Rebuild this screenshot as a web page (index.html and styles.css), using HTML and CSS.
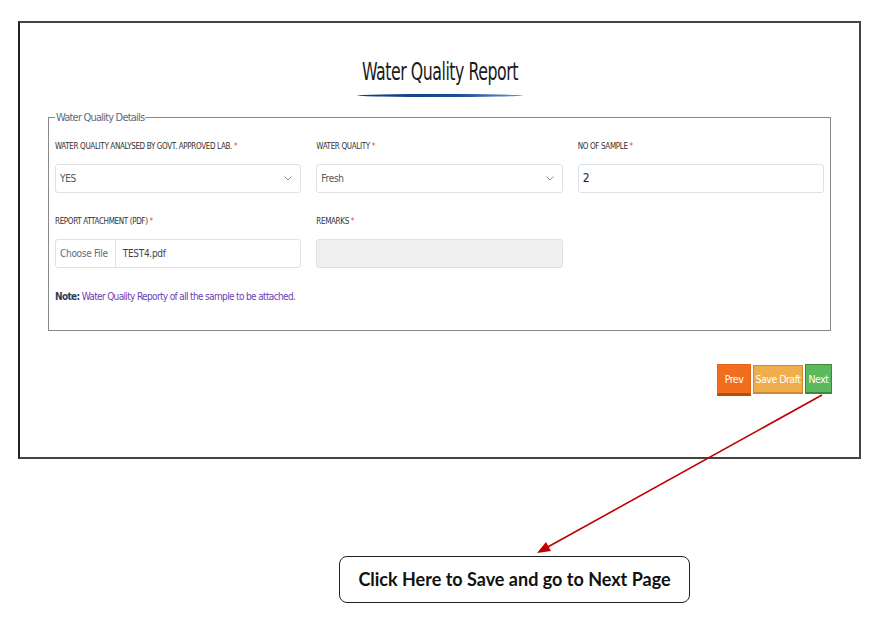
FILE: index.html
```html
<!DOCTYPE html>
<html lang="en">
<head>
<meta charset="UTF-8">
<meta name="viewport" content="width=device-width, initial-scale=1.0">
<title>Water Quality Report</title>
<link rel="stylesheet" href="styles.css">
</head>
<body>

<div class="frame">
    <div class="title-wrap">
        <h1>Water Quality Report</h1>
        <div class="title-line"></div>
    </div>

    <fieldset class="details">
        <legend>Water Quality Details</legend>
        <div class="form-grid">
            <div class="field">
                <label>WATER QUALITY ANALYSED BY GOVT. APPROVED LAB. <span class="req">*</span></label>
                <div class="input select">YES
                    <svg class="chev" width="8" height="5" viewBox="0 0 8 5"><path d="M0.5 0.5 L4 4 L7.5 0.5" fill="none" stroke="#8a8f99" stroke-width="1"/></svg>
                </div>
            </div>
            <div class="field">
                <label>WATER QUALITY <span class="req">*</span></label>
                <div class="input select">Fresh
                    <svg class="chev" width="8" height="5" viewBox="0 0 8 5"><path d="M0.5 0.5 L4 4 L7.5 0.5" fill="none" stroke="#8a8f99" stroke-width="1"/></svg>
                </div>
            </div>
            <div class="field">
                <label>NO OF SAMPLE <span class="req">*</span></label>
                <div class="input value">2</div>
            </div>
            <div class="field">
                <label>REPORT ATTACHMENT (PDF) <span class="req">*</span></label>
                <div class="input file">
                    <span class="file-btn">Choose File</span>
                    <span class="file-name">TEST4.pdf</span>
                </div>
            </div>
            <div class="field">
                <label>REMARKS <span class="req">*</span></label>
                <div class="input disabled"></div>
            </div>
        </div>
        <p class="note"><strong>Note:</strong> Water Quality Reporty of all the sample to be attached.</p>
    </fieldset>

    <div class="button-row">
        <button class="btn btn-prev">Prev</button>
        <button class="btn btn-draft">Save Draft</button>
        <button class="btn btn-next">Next</button>
    </div>
</div>

<div class="callout">Click Here to Save and go to Next Page</div>

<svg class="arrow" width="887" height="622" viewBox="0 0 887 622">
    <line x1="822" y1="395" x2="546" y2="548" stroke="#c00000" stroke-width="1.6"/>
    <polygon points="537,553 546,542 551,551" fill="#c00000"/>
</svg>

</body>
</html>
```

FILE: styles.css
```css
body {
    margin: 0;
    padding: 0;
    background-color: #fff;
    font-family: "DejaVu Sans Condensed", Roboto, sans-serif;
    color: #222;
    position: relative;
    width: 887px;
    height: 622px;
}
.frame {
    margin: 21px 0 0 18px;
    width: 843px;
    height: 438px;
    box-sizing: border-box;
    border: 2px solid #444;
    border-left-color: #222;
    padding: 0 28px;
}
.title-wrap {
    text-align: center;
    padding-top: 35px;
}
.title-wrap h1 {
    display: inline-block;
    margin: 0;
    font-size: 24px;
    line-height: 28px;
    font-weight: normal;
    color: #1b1b1b;
    letter-spacing: -0.6px;
    transform: scaleX(0.73);
}
.title-line {
    width: 166px;
    height: 3px;
    margin: 8px auto 0;
    border-radius: 50%;
    background: linear-gradient(90deg, #17397e, #1d4a9a 60%, #6f8fc9);
}
.details {
    margin: 14px 0 0;
    padding: 6px 6px 0 6px;
    border: 1px solid #8a8a8a;
    height: 220px;
    box-sizing: border-box;
}
.details legend {
    padding: 0 1px;
    margin-left: 0;
    font-size: 11px;
    letter-spacing: -0.8px;
    color: #5b6b86;
}
.form-grid {
    display: grid;
    grid-template-columns: repeat(3, 1fr);
    column-gap: 15px;
    row-gap: 23px;
    margin-top: 11px;
}
.field label {
    display: block;
    font-size: 8px;
    line-height: 12px;
    letter-spacing: -0.35px;
    color: #333;
    margin-bottom: 11px;
}
.req {
    color: #e0463a;
}
.input {
    height: 29px;
    box-sizing: border-box;
    border: 1px solid #dde2ea;
    border-radius: 3px;
    background: #fff;
    font-size: 10px;
    letter-spacing: -0.3px;
    line-height: 27px;
    padding: 0 4px;
    color: #555;
    display: flex;
    align-items: center;
}
.select {
    justify-content: space-between;
    padding-right: 8px;
}
.value {
    color: #222;
    font-size: 12px;
}
.disabled {
    background: #f0f0f0;
}
.file {
    padding: 0;
}
.file-btn {
    padding: 0 7px 0 4px;
    border-right: 1px solid #dde2ea;
    color: #5b6b86;
    height: 100%;
}
.file-name {
    padding-left: 7px;
    color: #444;
}
.note {
    margin: 23px 0 0;
    font-size: 10px;
    letter-spacing: -0.65px;
    color: #6a3fb8;
}
.note strong {
    color: #2c3e5c;
}
.button-row {
    display: flex;
    justify-content: flex-end;
    align-items: flex-start;
    gap: 2px;
    margin-top: 33px;
    margin-right: -1px;
}
.btn {
    border: 1px solid;
    color: #fff;
    font-family: inherit;
    font-size: 10.5px;
    letter-spacing: -0.5px;
    white-space: nowrap;
    padding: 0;
    height: 30px;
    cursor: pointer;
}
.btn-prev {
    background-color: #f06e1e;
    border-color: #e0641a;
    border-bottom: 3px solid #b4500f;
    width: 34px;
    height: 32px;
}
.btn-draft {
    background-color: #f0ad4e;
    border-color: #d0892c;
    border-bottom-width: 2px;
    width: 50px;
    margin-top: 1px;
    height: 29px;
}
.btn-next {
    background-color: #5cb85c;
    border-color: #3b8b3b;
    border-bottom-width: 2px;
    width: 27px;
}
.callout {
    margin: 97px 0 0 339px;
    width: 351px;
    height: 47px;
    box-sizing: border-box;
    border: 1.5px solid #222;
    border-radius: 8px;
    font-family: Lato, "Open Sans", sans-serif;
    font-weight: bold;
    font-size: 18px;
    line-height: 44px;
    text-align: center;
    color: #111;
}
.arrow {
    position: absolute;
    top: 0;
    left: 0;
    pointer-events: none;
}
```
